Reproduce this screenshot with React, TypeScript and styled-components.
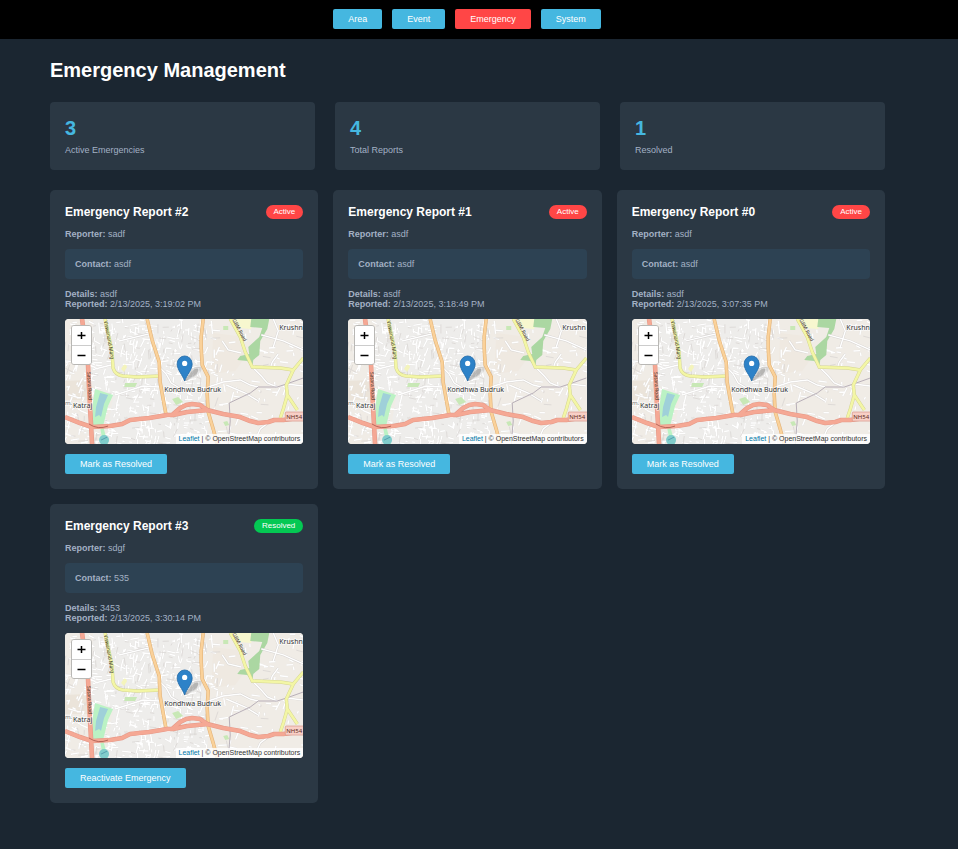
import React from "react";
import styled, { createGlobalStyle } from "styled-components";

const GlobalStyle = createGlobalStyle`
  * { box-sizing: border-box; }
  body {
    margin: 0;
    background: #1b2631;
    color: #a3b1c4;
    font: 9px/10px "Liberation Sans", Arial, sans-serif;
  }
  h1, h2, p { margin: 0; }
  button { font: inherit; cursor: pointer; }
`;

const NavBar = styled.nav`
  display: flex;
  justify-content: center;
  gap: 10px;
  padding: 9px 24px 10px 0;
  background: #000;
`;

const Button = styled.button<{ $danger?: boolean }>`
  padding: 5px 15px;
  border: 0;
  border-radius: 2px;
  background: ${(p) => (p.$danger ? "#ff4646" : "#45b7e0")};
  color: #fff;
`;

const Page = styled.main`
  padding: 19px 73px 46px 50px;
`;

const Title = styled.h1`
  color: #fff;
  font-size: 20px;
  line-height: 24px;
`;

const Stats = styled.section`
  display: grid;
  grid-template-columns: repeat(3, 1fr);
  gap: 20px;
  margin: 20px 0;
`;

const Stat = styled.div`
  padding: 15px;
  border-radius: 4px;
  background: #2b3844;
`;

const StatValue = styled.p`
  margin-bottom: 5px;
  color: #45b7e0;
  font-size: 20px;
  line-height: 23px;
  font-weight: bold;
`;

const Reports = styled.section`
  display: grid;
  grid-template-columns: repeat(3, 1fr);
  gap: 15px;
`;

const Card = styled.article`
  display: flex;
  flex-direction: column;
  align-items: stretch;
  gap: 10px;
  padding: 15px;
  border-radius: 5px;
  background: #2b3844;

  > ${Button} { align-self: flex-start; }
`;

const CardHeader = styled.header`
  display: flex;
  align-items: center;
  justify-content: space-between;
`;

const CardTitle = styled.h2`
  color: #fff;
  font-size: 12px;
  line-height: 14px;
`;

const Badge = styled.span<{ $active: boolean }>`
  padding: 2px 8px;
  border-radius: 7px;
  background: ${(p) => (p.$active ? "#ff4646" : "#04c853")};
  color: #fff;
  font-size: 8px;
`;

const Contact = styled.div`
  padding: 10px;
  border-radius: 4px;
  background: #2d4253;
`;

const MapFrame = styled.div`
  position: relative;
  height: 125px;
  overflow: hidden;
  border-radius: 4px;
  background: #f2efe9;
`;

const MapDrawing = styled.svg`
  display: block;
  width: 100%;
  height: 100%;
`;

const ZoomControl = styled.div`
  position: absolute;
  top: 6px;
  left: 6px;
  display: flex;
  flex-direction: column;
  border: 1px solid #b9b8b5;
  border-radius: 3px;
  overflow: hidden;
`;

const ZoomButton = styled.button`
  display: flex;
  align-items: center;
  justify-content: center;
  width: 19px;
  height: 19px;
  padding: 0;
  border: 0;
  background: #fff;
  color: #000;

  & + & { border-top: 1px solid #ccc; }
`;

const Attribution = styled.div`
  position: absolute;
  right: 0;
  bottom: 0;
  padding: 0 3px;
  background: rgba(255, 255, 255, 0.8);
  color: #333;
  font-size: 7px;

  a { color: #0078a8; text-decoration: none; }
`;

function createStreets() {
  let seed = 41;
  const next = () => {
    seed = (seed * 16807) % 2147483647;
    return seed / 2147483647;
  };
  let minor = "";
  let blocks = "";
  for (let i = 0; i < 1100; i++) {
    const x = next() * 238;
    const y = next() * 125;
    if (x > 150 && next() < 0.8) continue;
    const angle = 0.14 + (next() - 0.5) * 0.7 + (next() < 0.5 ? Math.PI / 2 : 0);
    const length = 2 + next() * 8;
    const segment = `M${x.toFixed(1)} ${y.toFixed(1)}l${(Math.cos(angle) * length).toFixed(1)} ${(Math.sin(angle) * length).toFixed(1)}`;
    if (i % 5 === 0) blocks += segment;
    else minor += segment;
  }
  return { minor, blocks };
}

const streets = createStreets();

const redRoads =
  "M17 0L20 22L23 46L24 69L26 106L27 125M0 98L15 104L27 108L45 107L57 105L65 101L84 99L102 96L108 96L122 93L143 91M107 96L115 89L121 86L127 85L135 86L142 91L158 95L175 98L185 102L193 104L203 103L209 101L218 101L238 98";
const orangeRoads =
  "M82 0L87 21L94 43L95 63L98 80L101 96M138 0L136 18L136 29L137 46L143 58L142 75L143 93L148 110L152 125";
const yellowRoads =
  "M40 0L44 19L47 33L48 49Q50 56 58 57L72 58L95 57M165 0L175 18L180 33L187 48L215 49L228 51M238 39L228 51L221 66L222 76L218 90L215 99M222 76L232 91";
const whiteRoads =
  "M95 49L101 55L106 64L116 70M187 48L196 57L202 64L212 68M143 68L158 63L175 61L185 66L193 68M161 66L180 74L193 82M157 22L163 31L176 34M50 76L78 67L94 68M0 42L20 43M54 22L84 15M113 51L135 47M205 49L207 43L213 35M196 16L218 22L238 31M208 0L213 12L208 28M222 65L238 67M188 125L195 110L204 103M30 50L46 46";

function MapScene() {
  return (
    <MapDrawing viewBox="0 0 238 125" preserveAspectRatio="xMidYMid slice" aria-hidden="true">
      <path d="M0 0H238V125H0Z" fill="#f0ece6" />
      <path d="M28 0H134L136 50L143 70V125H40L48 78L26 66Z" fill="#eeedeb" />
      <path d="M0 62L22 61V81H0Z" fill="#ebe4da" />
      <path d="M148 14L172 17L180 38L170 52L146 55Z" fill="#efe9e1" />
      <path d={streets.minor} stroke="#e0dedc" strokeWidth="1.8" fill="none" />
      <path d={streets.minor} stroke="#fff" strokeWidth="1.4" fill="none" />
      <path d={streets.blocks} stroke="#d9d6d3" strokeWidth="0.8" fill="none" />
      <path d="M168 0H186V10L174 9Z" fill="#f7f7cf" />
      <path d="M186 0H204L202 10L195 22L194 36L188 41L187 49L182 42L172 41L175 37L184 35L183 28L194 18L197 9L185 8Z" fill="#abd7a2" />
      <path d="M30 70L48 76L43 87L38 107L43 125H38L35 108L27 107L28 83Z" fill="#bbf2c4" />
      <path d="M35 74L43 76L39 85L36 98L34 96L30 98L31 88Z" fill="#9fd0d9" />
      <circle cx="39" cy="121" r="5" fill="#80cccb" />
      <path d="M36 121L42 118" stroke="#559eae" fill="none" />
      <path d="M60 64H72L70 68H59ZM107 80L113 78L118 83L111 86ZM158 103L162 102L164 106L160 107ZM158 7H163V11H158Z" fill="#c8e8b6" />
      <path d="M56 50Q60 42 62 48L59 53Z" fill="#f4f4bc" />
      <path d={whiteRoads} stroke="#d6d3d1" strokeWidth="2.2" fill="none" />
      <path d={whiteRoads} stroke="#fff" strokeWidth="1.4" fill="none" />
      <path d="M163 125L165 102L164 84L185 74L193 68L212 68L224 64L238 59" stroke="#aaa0ad" strokeWidth="0.8" fill="none" />
      <path d={yellowRoads} stroke="#d4d492" strokeWidth="3.4" fill="none" />
      <path d={yellowRoads} stroke="#f3f6a5" strokeWidth="2.5" fill="none" />
      <path d={orangeRoads} stroke="#e3b47a" strokeWidth="3.6" fill="none" />
      <path d={orangeRoads} stroke="#fad199" strokeWidth="2.4" fill="none" />
      <path d={redRoads} stroke="#e69a89" strokeWidth="4.6" strokeLinejoin="round" fill="none" />
      <path d={redRoads} stroke="#f5a894" strokeWidth="3.4" strokeLinejoin="round" fill="none" />
      <path d="M24 105Q33 111 43 107" stroke="#a7564b" strokeWidth="0.8" fill="none" />
      <g fontFamily="'Noto Sans', sans-serif" fontSize="7" fill="#333" stroke="#fff" strokeWidth="1.4" strokeOpacity="0.7" paintOrder="stroke">
        <text x="8" y="89">Katraj</text>
        <text x="0" y="86" fontSize="6" fill="#777">m.</text>
        <text x="99" y="73">Kondhwa Budruk</text>
        <text x="214" y="11">Krushn</text>
      </g>
      <g fontFamily="'Noto Sans', sans-serif" fontSize="5" fill="#302c20">
        <text transform="translate(39 2) rotate(80)">Viswanand Marg</text>
        <text transform="translate(22 53) rotate(87)">Satara Road</text>
        <text transform="translate(167 1) rotate(62)">GBM Road</text>
      </g>
      <rect x="220" y="93" width="24" height="9" rx="1" fill="#f8cfc6" stroke="#d9988c" strokeWidth="0.7" />
      <text x="221" y="100" fontFamily="'Noto Sans', sans-serif" fontSize="6" fill="#5f2920">NH54</text>
      <path d="M119 62L127 50Q131 46 136 48Q138 51 132 56L122 62Z" fill="#444" opacity="0.14" />
      <path d="M119 62L127 52Q130 49 133 50Q134 52 130 56L121 62Z" fill="#444" opacity="0.22" />
      <path d="M119.500 62C117.500 56 112 51 112 45A7.500 8 0 0 1 127 45C127 51 121.500 56 119.500 62Z" fill="#2d82c8" stroke="#236aa8" strokeWidth="0.8" />
      <circle cx="119.500" cy="44.500" r="2.600" fill="#fff" />
    </MapDrawing>
  );
}

function ReportMap() {
  return (
    <MapFrame>
      <MapScene />
      <ZoomControl>
        <ZoomButton type="button" aria-label="Zoom in">
          <svg width="9" height="9" viewBox="0 0 9 9"><path d="M0.500 4.500H8.500M4.500 1V8" stroke="#000" strokeWidth="1.500" /></svg>
        </ZoomButton>
        <ZoomButton type="button" aria-label="Zoom out">
          <svg width="9" height="9" viewBox="0 0 9 9"><path d="M0.500 4.500H8.500" stroke="#000" strokeWidth="1.300" /></svg>
        </ZoomButton>
      </ZoomControl>
      <Attribution>
        <a href="https://leafletjs.com">Leaflet</a> | © OpenStreetMap contributors
      </Attribution>
    </MapFrame>
  );
}

interface Report {
  id: number;
  reporter: string;
  contact: string;
  details: string;
  reported: string;
  active: boolean;
}

const reports: Report[] = [
  { id: 2, reporter: "sadf", contact: "asdf", details: "asdf", reported: "2/13/2025, 3:19:02 PM", active: true },
  { id: 1, reporter: "asdf", contact: "asdf", details: "asdf", reported: "2/13/2025, 3:18:49 PM", active: true },
  { id: 0, reporter: "asdf", contact: "asdf", details: "asdf", reported: "2/13/2025, 3:07:35 PM", active: true },
  { id: 3, reporter: "sdgf", contact: "535", details: "3453", reported: "2/13/2025, 3:30:14 PM", active: false },
];

const stats = [
  { value: 3, label: "Active Emergencies" },
  { value: 4, label: "Total Reports" },
  { value: 1, label: "Resolved" },
];

function ReportCard({ report }: { report: Report }) {
  return (
    <Card>
      <CardHeader>
        <CardTitle>Emergency Report #{report.id}</CardTitle>
        <Badge $active={report.active}>{report.active ? "Active" : "Resolved"}</Badge>
      </CardHeader>
      <p><strong>Reporter:</strong> {report.reporter}</p>
      <Contact><strong>Contact:</strong> {report.contact}</Contact>
      <div>
        <p><strong>Details:</strong> {report.details}</p>
        <p><strong>Reported:</strong> {report.reported}</p>
      </div>
      <ReportMap />
      <Button type="button">{report.active ? "Mark as Resolved" : "Reactivate Emergency"}</Button>
    </Card>
  );
}

export default function App() {
  return (
    <>
      <GlobalStyle />
      <NavBar>
        {["Area", "Event", "Emergency", "System"].map((name) => (
          <Button key={name} type="button" $danger={name === "Emergency"}>{name}</Button>
        ))}
      </NavBar>
      <Page>
        <Title>Emergency Management</Title>
        <Stats>
          {stats.map((stat) => (
            <Stat key={stat.label}>
              <StatValue>{stat.value}</StatValue>
              <p>{stat.label}</p>
            </Stat>
          ))}
        </Stats>
        <Reports>
          {reports.map((report) => <ReportCard key={report.id} report={report} />)}
        </Reports>
      </Page>
    </>
  );
}
